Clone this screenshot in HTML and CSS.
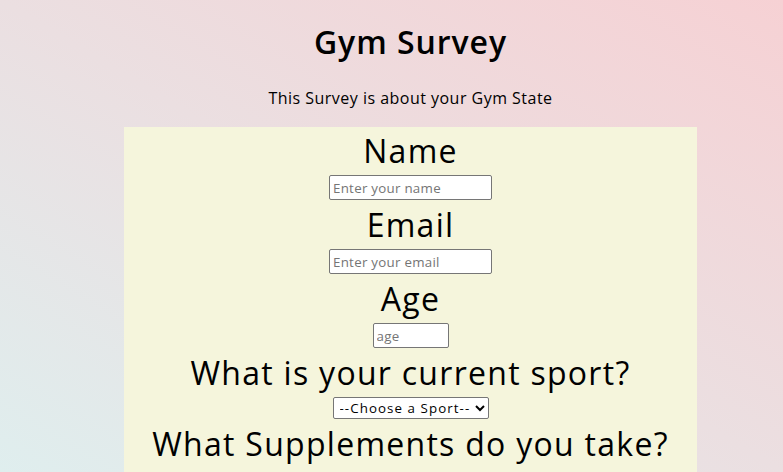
FILE: index.html
```html
<!DOCTYPE html>
<html lang="en">
<head>
<meta charset="utf-8">
<title>Gym Survey</title>
<link rel="stylesheet" href="styles.css">
</head>
<body>
<div class="page">
  <header class="header">
    <h1 class="title">Gym Survey</h1>
    <p class="description">This Survey is about your Gym State</p>
  </header>
  <form class="survey">
    <label class="field-label" for="name">Name</label>
    <input class="field field-text" id="name" type="text" placeholder="Enter your name">
    <label class="field-label" for="email">Email</label>
    <input class="field field-text" id="email" type="email" placeholder="Enter your email">
    <label class="field-label" for="age">Age</label>
    <input class="field field-age" id="age" type="number" placeholder="age">
    <label class="field-label" for="sport">What is your current sport?</label>
    <select class="field field-select" id="sport">
      <option>--Choose a Sport--</option>
      <option>Bodybuilding</option>
      <option>Powerlifting</option>
      <option>CrossFit</option>
    </select>
    <label class="field-label">What Supplements do you take?</label>
    <div class="options">
      <label class="option"><input type="checkbox"> Protein</label>
      <label class="option"><input type="checkbox"> Creatine</label>
      <label class="option"><input type="checkbox"> Pre-workout</label>
    </div>
  </form>
</div>
</body>
</html>
```

FILE: styles.css
```css
html, body {
  margin: 0;
  padding: 0;
}
body {
  min-height: 100vh;
  font-family: "Open Sans", "DejaVu Sans", sans-serif;
  color: #000;
  background: linear-gradient(to top right, #dfeeee 0%, #ebdfe1 50%, #f6d1d4 100%) fixed;
}
.page {
  padding-left: 38px;
}
.header {
  padding-top: 18px;
  text-align: center;
}
.title {
  margin: 0;
  font-size: 32px;
  line-height: 48px;
  font-weight: 600;
  letter-spacing: 0.03em;
}
.description {
  margin: 20px 0 17px;
  font-size: 16px;
  line-height: 24px;
  letter-spacing: 0.03em;
}
.survey {
  width: 573px;
  margin: 0 auto;
  background: #f5f5dc;
  text-align: center;
  padding-bottom: 20px;
}
.field-label {
  display: block;
  font-size: 32px;
  line-height: 48px;
  letter-spacing: 0.04em;
}
.field {
  display: block;
  margin: 0 auto 1px;
  box-sizing: border-box;
  font-family: inherit;
  font-size: 13.33px;
  background: #fff;
  border: 1px solid #767676;
  border-radius: 2px;
}
.field-text {
  width: 163px;
  height: 25px;
  padding: 1px 3px;
  letter-spacing: 0.02em;
}
.field-age {
  width: 76px;
  height: 25px;
  padding: 1px 3px;
  letter-spacing: 0.02em;
}
.field-select {
  width: 156px;
  height: 22px;
  padding: 0 2px;
  color: #000;
  letter-spacing: 0.08em;
}
.field::placeholder {
  color: #757575;
}
.options {
  display: flex;
  flex-direction: column;
  align-items: center;
  gap: 6px;
  margin-top: 16px;
  font-size: 16px;
}
```
